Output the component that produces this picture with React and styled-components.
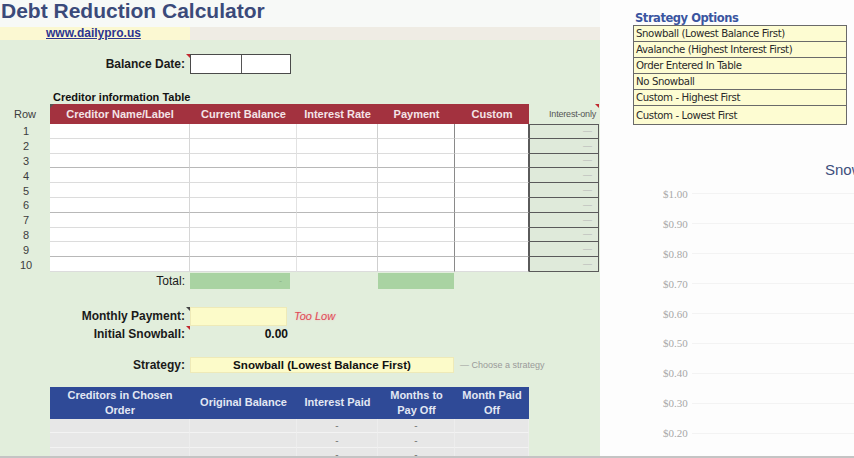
import React from 'react';
import styled, { createGlobalStyle } from 'styled-components';

const GlobalStyle = createGlobalStyle`
  html, body {
    margin: 0;
    padding: 0;
    background: #fdfdfd;
    font-family: "Liberation Sans", Arial, sans-serif;
  }
`;

const COLS = '50px 140px 107px 81px 77px 74px 70px';

const Page = styled.div`
  display: flex;
  width: 854px;
  height: 458px;
  overflow: hidden;
  position: relative;
  border-bottom: 2px solid #c4c4c4;
  box-sizing: border-box;
`;

const Sheet = styled.div`
  width: 600px;
  flex: none;
  display: flex;
  flex-direction: column;
  background: #e2eedc;
  overflow: hidden;
  & > * {
    flex: none;
  }
`;

const TitleBar = styled.div`
  height: 27px;
  background: #f7f9f7;
  display: flex;
  align-items: flex-start;
`;

const Title = styled.h1`
  margin: 0;
  padding-left: 1px;
  font-size: 21px;
  line-height: 21px;
  font-weight: bold;
  color: #3b4a7a;
`;

const LinkRow = styled.div`
  height: 13px;
  display: flex;
  background: #efece4;
`;

const LinkCell = styled.div`
  width: 190px;
  background: #fbf8d2;
  padding-left: 46px;
  box-sizing: border-box;
  font-size: 12px;
  line-height: 13px;
  font-weight: bold;
`;

const Link = styled.a`
  color: #2c3590;
  text-decoration: underline;
`;

const Body = styled.div`
  display: flex;
  flex-direction: column;
  & > * {
    flex: none;
  }
`;

const Row = styled.div`
  display: grid;
  grid-template-columns: ${COLS};
  height: ${p => p.h}px;
  margin-top: ${p => p.mt || 0}px;
`;

const Label = styled.div`
  grid-column: 1 / 3;
  display: flex;
  align-items: center;
  justify-content: flex-end;
  padding-right: 5px;
  font-size: 12px;
  font-weight: ${p => (p.plain ? 'normal' : 'bold')};
  color: #1a1a1a;
  position: relative;
`;

const Marker = styled.span`
  position: absolute;
  top: 0;
  ${p => (p.left ? 'left: 0;' : 'right: 0;')}
  width: 0;
  height: 0;
  border-top: 4px solid ${p => p.color || '#c0282e'};
  ${p => (p.left ? 'border-right: 4px solid transparent;' : 'border-left: 4px solid transparent;')}
`;

const DateBox = styled.div`
  grid-column: 3;
  width: 101px;
  display: grid;
  grid-template-columns: 51px 1fr;
  border: 1px solid #4a4a4a;
  background: #fff;
  box-sizing: border-box;
`;

const DateHalf = styled.div`
  border-right: ${p => (p.divider ? '1px solid #555' : 'none')};
`;

const Caption = styled.div`
  padding-left: 53px;
  font-size: 11px;
  font-weight: bold;
  line-height: 12px;
  height: 12px;
  margin-top: 17px;
  color: #111;
`;

const HeadCell = styled.div`
  background: ${p => p.bg};
  color: ${p => p.fg};
  font-size: 11px;
  font-weight: bold;
  display: flex;
  align-items: center;
  justify-content: center;
  text-align: center;
  line-height: 15px;
  position: relative;
`;

const RowNum = styled.div`
  display: flex;
  align-items: center;
  justify-content: center;
  font-size: 11px;
  color: #3c3c3c;
  padding-left: ${p => (p.wide ? '0' : '2px')};
`;

const SmallNote = styled.div`
  display: flex;
  align-items: center;
  justify-content: flex-end;
  padding-right: 3px;
  font-size: 9px;
  color: #555;
  letter-spacing: -0.2px;
  position: relative;
`;

const DataCell = styled.div`
  background: #fff;
  border-bottom: 1px solid ${p => (p.dark ? '#b8b8b8' : '#dcdcdc')};
  border-right: 1px solid ${p => p.line || '#e2e2e2'};
  box-sizing: border-box;
`;

const FlagCell = styled.div`
  background: #dfeada;
  border: 1px solid #5a5a5a;
  border-top: none;
  box-sizing: border-box;
  display: flex;
  align-items: center;
  justify-content: flex-end;
  padding-right: 6px;
  font-size: 9px;
  color: #b5b5b5;
  ${p => p.first && 'border-top: 1px solid #5a5a5a;'}
`;

const SumCell = styled.div`
  grid-column: ${p => p.col};
  width: ${p => p.w}px;
  background: #a9d3a2;
  display: flex;
  align-items: center;
  justify-content: flex-end;
  padding-right: 8px;
  box-sizing: border-box;
  font-size: 9px;
  color: #8fb38a;
`;

const InputCell = styled.div`
  grid-column: 3 / ${p => p.end};
  width: ${p => p.w}px;
  background: #fcfbc9;
  border: 1px solid #eeeab8;
  box-sizing: border-box;
  display: flex;
  align-items: center;
  justify-content: center;
  font-size: 11.6px;
  font-weight: bold;
  color: #111;
`;

const Warning = styled.div`
  grid-column: 4 / 6;
  display: flex;
  align-items: center;
  margin-left: -3px;
  font-size: 11px;
  font-style: italic;
  color: #dd4b55;
  text-shadow: 0 0 2px #f4b8bd;
`;

const Value = styled.div`
  grid-column: 3;
  width: 98px;
  display: flex;
  align-items: center;
  justify-content: flex-end;
  font-size: 12px;
  font-weight: bold;
  color: #111;
`;

const Hint = styled.div`
  grid-column: 6 / 8;
  display: flex;
  align-items: center;
  padding-left: 5px;
  font-size: 9px;
  color: #9a9a9a;
  white-space: nowrap;
`;

const GrayCell = styled.div`
  background: #e7e7e7;
  border-bottom: 1px solid #f3f3f3;
  border-right: 1px solid #ededed;
  display: flex;
  align-items: center;
  justify-content: center;
  font-size: 10px;
  color: #777;
`;

const Pane = styled.div`
  flex: 1;
  display: flex;
  flex-direction: column;
  padding: 12px 0 0 33px;
  background: #fdfdfd;
  min-width: 0;
  & > * {
    flex: none;
  }
`;

const OptTitle = styled.div`
  padding-left: 2px;
  font-size: 11.5px;
  line-height: 13px;
  font-weight: bold;
  color: #3a55a0;
  font-family: "DejaVu Sans", Verdana, sans-serif;
  letter-spacing: -0.45px;
`;

const OptList = styled.div`
  width: 212px;
  border: 1px solid #6a6a6a;
  background: #fdfcd2;
  display: flex;
  flex-direction: column;
`;

const Opt = styled.div`
  height: ${p => p.h || 16}px;
  flex: none;
  border-bottom: ${p => (p.last ? 'none' : '1px solid #6a6a6a')};
  box-sizing: border-box;
  padding-left: 2px;
  display: flex;
  align-items: center;
  font-family: "DejaVu Sans", Verdana, sans-serif;
  font-size: 10.2px;
  letter-spacing: -0.4px;
  color: #2a2a2a;
  white-space: nowrap;
`;

const Chart = styled.div`
  margin-top: 37px;
  margin-left: -33px;
  display: flex;
  flex-direction: column;
`;

const ChartTitle = styled.div`
  height: 15px;
  padding-left: 225px;
  font-size: 15px;
  line-height: 15px;
  color: #3d4f7c;
  white-space: nowrap;
`;

const Axis = styled.div`
  margin-top: 2px;
  display: flex;
  flex-direction: column;
`;

const Tick = styled.div`
  height: 29.9px;
  flex: none;
  display: flex;
  align-items: center;
  padding-left: 63px;
  gap: 4px;
  font-family: "Liberation Serif", "Times New Roman", serif;
  font-size: 11px;
  color: #a8a8a8;
  &::after {
    content: '';
    flex: 1;
    height: 1px;
    background: #f3f3f3;
  }
`;

const creditorHeads = ['Creditor Name/Label', 'Current Balance', 'Interest Rate', 'Payment', 'Custom'];
const orderHeads = [['Creditors in Chosen', 'Order'], ['Original Balance'], ['Interest Paid'], ['Months to', 'Pay Off'], ['Month Paid', 'Off']];
const strategies = [
  'Snowball (Lowest Balance First)',
  'Avalanche (Highest Interest First)',
  'Order Entered In Table',
  'No Snowball',
  'Custom - Highest First',
  'Custom - Lowest First',
];
const ticks = ['$1.00', '$0.90', '$0.80', '$0.70', '$0.60', '$0.50', '$0.40', '$0.30', '$0.20'];
const rows = [1, 2, 3, 4, 5, 6, 7, 8, 9, 10];

const App = () => {
  return (
    <>
      <GlobalStyle />
      <Page>
        <Sheet>
          <TitleBar>
            <Title>Debt Reduction Calculator</Title>
          </TitleBar>
          <LinkRow>
            <LinkCell>
              <Link href="#">www.dailypro.us</Link>
            </LinkCell>
          </LinkRow>
          <Body>
            <Row h={20} mt={14}>
              <Label>
                Balance Date:
                <Marker />
              </Label>
              <DateBox>
                <DateHalf divider />
                <DateHalf />
              </DateBox>
            </Row>

            <Caption>Creditor information Table</Caption>

            <Row h={20} mt={1}>
              <RowNum wide>Row</RowNum>
              {creditorHeads.map((h, i) => (
                <HeadCell key={h} bg="#a3323f" fg="#f4e4e7">
                  {h}
                  {i === 0 && <Marker left color="#555" />}
                </HeadCell>
              ))}
              <SmallNote>
                Interest-only
                <Marker />
              </SmallNote>
            </Row>

            {rows.map(n => (
              <Row h={14.8} key={n}>
                <RowNum>{n}</RowNum>
                <DataCell dark={n % 3 === 0} line="#d6d6d6" />
                <DataCell dark={n % 3 === 0} />
                <DataCell dark={n % 3 === 0} line="#cfcfcf" />
                <DataCell dark={n % 3 === 0} line="#8a8a8a" />
                <DataCell dark={n % 3 === 0} line="#5a5a5a" />
                <FlagCell first={n === 1}>—</FlagCell>
              </Row>
            ))}

            <Row h={16} mt={1}>
              <Label plain>Total:</Label>
              <SumCell col={3} w={100}>-</SumCell>
              <SumCell col={5} w={76} />
            </Row>

            <Row h={19} mt={18}>
              <Label>
                Monthly Payment:
                <Marker color="#444" />
              </Label>
              <InputCell end={4} w={97} />
              <Warning>Too Low</Warning>
            </Row>

            <Row h={16}>
              <Label>
                Initial Snowball:
                <Marker />
              </Label>
              <Value>0.00</Value>
            </Row>

            <Row h={16} mt={15}>
              <Label>Strategy:</Label>
              <InputCell end={6} w={264}>Snowball (Lowest Balance First)</InputCell>
              <Hint>— Choose a strategy</Hint>
            </Row>

            <Row h={32} mt={14}>
              <div />
              {orderHeads.map(lines => (
                <HeadCell key={lines.join(' ')} bg="#2f4a97" fg="#e2e7f3">
                  <span>
                    {lines.map((l, i) => (
                      <React.Fragment key={l}>
                        {i > 0 && <br />}
                        {l}
                      </React.Fragment>
                    ))}
                  </span>
                </HeadCell>
              ))}
            </Row>

            {[0, 1, 2].map(r => (
              <Row h={14.5} key={r}>
                <div />
                <GrayCell />
                <GrayCell />
                <GrayCell>-</GrayCell>
                <GrayCell>-</GrayCell>
                <GrayCell />
              </Row>
            ))}
          </Body>
        </Sheet>

        <Pane>
          <OptTitle>Strategy Options</OptTitle>
          <OptList>
            {strategies.map((s, i) => (
              <Opt key={s} last={i === strategies.length - 1} h={i === 5 ? 18 : 16}>
                {s}
              </Opt>
            ))}
          </OptList>
          <Chart>
            <ChartTitle>Snowball Chart</ChartTitle>
            <Axis>
              {ticks.map(t => (
                <Tick key={t}>{t}</Tick>
              ))}
            </Axis>
          </Chart>
        </Pane>
      </Page>
    </>
  );
};

export default App;
